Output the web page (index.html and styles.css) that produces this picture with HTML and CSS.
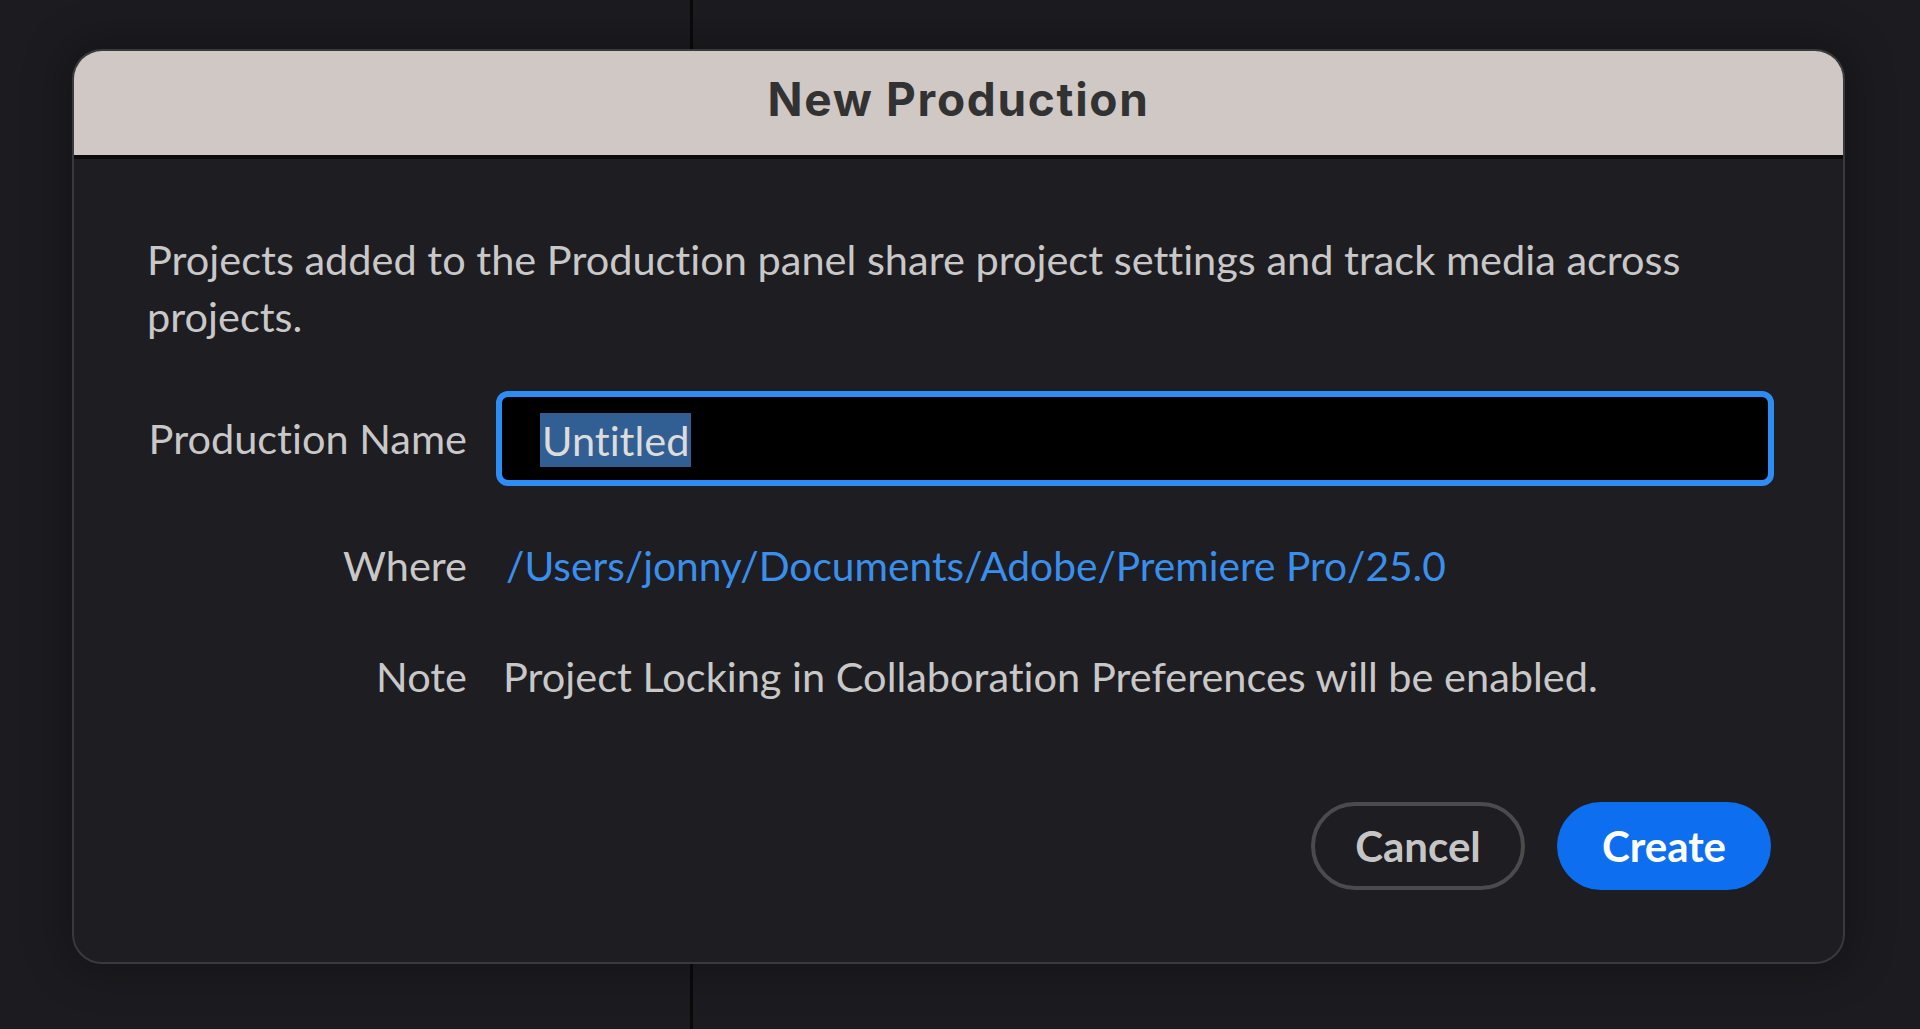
FILE: index.html
```html
<!DOCTYPE html>
<html lang="en">
<head>
<meta charset="utf-8">
<title>New Production</title>
<link rel="stylesheet" href="styles.css">
</head>
<body>
<div class="stage">
  <div class="dialog">
    <div class="titlebar">New Production</div>
    <div class="content">
      <p class="desc">Projects added to the Production panel share project settings and track media across projects.</p>
      <div class="form">
        <div class="label label-name">Production Name</div>
        <div class="input"><span class="sel">Untitled</span></div>
        <div class="label label-where">Where</div>
        <div class="path">/Users/jonny/Documents/Adobe/Premiere Pro/25.0</div>
        <div class="label label-note">Note</div>
        <div class="note">Project Locking in Collaboration Preferences will be enabled.</div>
      </div>
      <div class="actions">
        <button class="btn btn-cancel">Cancel</button>
        <button class="btn btn-create">Create</button>
      </div>
    </div>
  </div>
</div>
</body>
</html>
```
FILE: styles.css
```css
html, body {
  margin: 0;
  padding: 0;
}
body {
  width: 1920px;
  height: 1029px;
  overflow: hidden;
  background-color: #1c1b1f;
  background-image: linear-gradient(to right, transparent 690px, #0a0a0b 690px, #0a0a0b 693px, transparent 693px);
  font-family: "Lato", "Open Sans", sans-serif;
  font-variant-ligatures: none;
}
.stage {
  padding: 49px 0 0 72px;
}
.dialog {
  width: 1773px;
  height: 915px;
  box-sizing: border-box;
  border-radius: 30px;
  background: #1e1d21;
  border: 2px solid #3a393d;
  box-shadow: 0 0 40px 10px rgba(0,0,0,0.25);
  display: flex;
  flex-direction: column;
  overflow: hidden;
}
.titlebar {
  height: 110px;
  flex: none;
  box-sizing: border-box;
  margin: -2px -2px 0 -2px;
  background: #d0c8c5;
  border-bottom: 4px solid #0b0b0c;
  color: #333233;
  font-family: "Inter", "Liberation Sans", sans-serif;
  font-weight: 700;
  font-size: 46px;
  letter-spacing: 1.7px;
  display: flex;
  align-items: center;
  justify-content: center;
  padding-bottom: 6px;
}
.content {
  padding: 0 69px 0 73px;
  display: flex;
  flex-direction: column;
  color: #c9c8c9;
  font-size: 41.5px;
}
.desc {
  margin: 72px 0 0 0;
  line-height: 57px;
}
.form {
  margin-top: 45.5px;
  display: grid;
  grid-template-columns: 320px 1fr;
  column-gap: 29px;
  row-gap: 0;
  align-items: center;
}
.label {
  text-align: right;
  line-height: 57px;
}
.input {
  height: 95px;
  box-sizing: border-box;
  border: 6px solid #2f8cf2;
  border-radius: 12px;
  background: #000;
  display: flex;
  align-items: center;
  padding-left: 38px;
}
.sel {
  background: #325f93;
  color: #dcdcdc;
  line-height: 54px;
  padding: 0 2px;
  margin-top: 4px;
}
.label-where {
  margin-top: 51.5px;
}
.path {
  margin-top: 51.5px;
  color: #3a8fed;
  line-height: 57px;
  padding-left: 10px;
  font-size: 40.7px;
}
.label-note {
  margin-top: 54px;
}
.note {
  margin-top: 54px;
  line-height: 57px;
  padding-left: 7px;
}
.actions {
  display: flex;
  justify-content: flex-end;
  gap: 32px;
  margin-top: 96.5px;
  margin-right: 3px;
}
.btn {
  height: 88px;
  width: 214px;
  border-radius: 44px;
  font-family: "Lato", "Open Sans", sans-serif;
  font-weight: 700;
  font-size: 42px;
  cursor: pointer;
}
.btn-cancel {
  background: transparent;
  border: 4px solid #4b4a4d;
  color: #c6c5c6;
}
.btn-create {
  background: #0d6ef0;
  border: none;
  color: #ffffff;
}
```
